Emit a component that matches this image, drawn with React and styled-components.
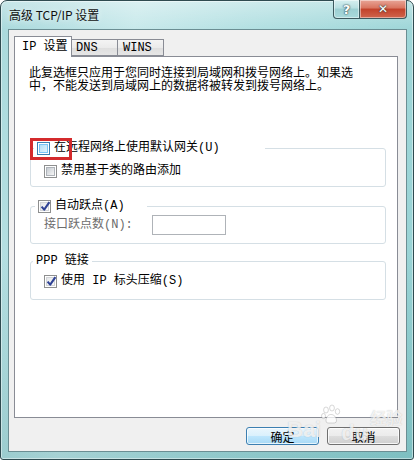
import React from 'react';
import styled, { createGlobalStyle } from 'styled-components';

const MONO = `"Liberation Mono", "Noto Sans CJK SC", monospace`;

const GlobalStyle = createGlobalStyle`
  html, body { margin: 0; padding: 0; background: #ffffff; }
  body { font-family: "Noto Sans CJK SC", sans-serif; font-size: 12px; color: #000; }
  * { box-sizing: border-box; }
`;

const Window = styled.div`
  position: relative;
  width: 414px;
  height: 460px;
  display: flex;
  flex-direction: column;
  padding: 0 6px 7px 7px;
  border: 1px solid #2f4b50;
  border-radius: 7px 7px 3px 3px;
  background:
    linear-gradient(180deg, rgba(255,255,255,0.35) 0, rgba(255,255,255,0) 28px),
    linear-gradient(180deg, rgba(0,0,0,0) 55%, rgba(40,125,128,0.22) 100%),
    linear-gradient(100deg, #a9d9dc 0%, #c8e9eb 28%, #b3e0e2 52%, #a2d8da 78%, #95d1d3 100%);
  box-shadow: inset 0 0 0 1px rgba(255,255,255,0.45);
`;

const TitleBar = styled.div`
  height: 28px;
  flex: none;
  display: flex;
  justify-content: space-between;
  align-items: flex-start;
`;

const Title = styled.div`
  margin: 6px 0 0 1px;
  line-height: 16px;
  font-size: 12px;
  color: #101010;
  font-family: "Noto Sans CJK SC", "Liberation Sans", sans-serif;
  text-shadow: 0 0 6px rgba(255,255,255,0.9);
`;

const Caption = styled.div`
  display: flex;
  margin-top: -1px;
`;

const CaptionButton = styled.div`
  height: 19px;
  width: ${p => p.$w}px;
  border: 1px solid #3d5a5f;
  border-top: none;
  display: flex;
  align-items: center;
  justify-content: center;
  color: #fff;
  font-family: "DejaVu Sans", sans-serif;
  font-weight: bold;
  font-size: ${p => p.$size}px;
  text-shadow: 0 0 2px #203a3e, 0 0 1px #203a3e;
  border-radius: ${p => p.$radius};
  background: ${p => p.$bg};
  box-shadow: inset 0 0 0 1px rgba(255,255,255,0.45);
`;

const Client = styled.div`
  flex: 1;
  display: flex;
  flex-direction: column;
  border: 1px solid #6b8e93;
  background: #f0f0f0;
  padding: 6px 8px 6px 5px;
`;

const Tabs = styled.div`
  height: 20px;
  flex: none;
  display: flex;
  align-items: flex-end;
  position: relative;
  z-index: 1;
`;

const Tab = styled.div`
  width: ${p => p.$w}px;
  height: ${p => (p.$active ? 21 : 17)}px;
  margin-bottom: ${p => (p.$active ? -1 : 0)}px;
  margin-left: ${p => (p.$active ? 0 : -1)}px;
  padding-left: ${p => p.$pad}px;
  border: 1px solid #898c95;
  border-bottom: ${p => (p.$active ? 'none' : '1px solid #898c95')};
  background: ${p => (p.$active ? '#ffffff' : 'linear-gradient(180deg, #f4f4f4 0%, #ebebeb 50%, #dedede 51%, #e6e6e6 100%)')};
  display: flex;
  align-items: center;
  font-family: ${MONO};
  font-size: 12px;
  line-height: 14px;
  color: #000;
`;

const Panel = styled.div`
  height: 362px;
  flex: none;
  background: #ffffff;
  border: 1px solid #898c95;
  padding: 11px 11px 0 14px;
  display: flex;
  flex-direction: column;
`;

const Intro = styled.p`
  margin: 0;
  font-family: ${MONO};
  font-size: 12px;
  line-height: 13px;
  white-space: nowrap;
`;

const Group = styled.fieldset`
  margin: ${p => p.$top}px 0 0 1px;
  min-width: 0;
  padding: ${p => p.$pad};
  border: 1px solid #d5dfe5;
  border-radius: 3px;
`;

const Legend = styled.legend`
  position: relative;
  width: ${p => (p.$width ? `${p.$width}px` : 'auto')};
  height: 14px;
  margin-left: ${p => p.$offset}px;
  padding: 0 3px;
  line-height: 14px;
`;

const Row = styled.div`
  display: flex;
  align-items: center;
  gap: 4px;
  height: ${p => p.$h || 14}px;
  padding-left: ${p => p.$indent || 0}px;
  font-family: ${MONO};
  font-size: 12px;
  line-height: 14px;
  white-space: nowrap;
  color: ${p => (p.$disabled ? '#6d6d6d' : '#000')};
`;

const Label = styled.span`
  display: inline-block;
  width: ${p => (p.$w ? `${p.$w}px` : 'auto')};
`;

const Box = styled.span`
  position: relative;
  width: 13px;
  height: 13px;
  flex: none;
  background: #fff;
  border: 1px solid ${p => (p.$hover ? '#3c7fb1' : '#8e8f8f')};
  &::before {
    content: '';
    position: absolute;
    inset: 1px;
    border: 1px solid ${p => (p.$hover ? '#79c6f9' : p.$checked ? '#d2d4d7' : '#aeb3b9')};
    background: ${p =>
      p.$hover
        ? 'linear-gradient(135deg, #b1dff9 0%, #e2f4fd 100%)'
        : p.$checked
          ? 'linear-gradient(135deg, #e4e6e9 0%, #fbfbfb 100%)'
          : 'linear-gradient(135deg, #c6cbd1 0%, #f6f6f6 100%)'};
  }
  svg { position: absolute; left: 0; top: -1px; }
`;

const TextInput = styled.div`
  width: 74px;
  height: 20px;
  border: 1px solid #afb3b8;
  background: #ffffff;
`;

const Marker = styled.span`
  position: absolute;
  left: -4px;
  top: -3px;
  width: 42px;
  height: 22px;
  border: 3px solid #d42a2c;
  pointer-events: none;
`;

const Footer = styled.div`
  display: flex;
  justify-content: flex-end;
  gap: 8px;
  margin: 9px -2px 0 0;
`;

const Button = styled.div`
  width: 73px;
  height: 18px;
  border: 1px solid ${p => (p.$primary ? '#3c7fb1' : '#707070')};
  border-radius: 3px;
  display: flex;
  align-items: center;
  justify-content: center;
  font-size: 12px;
  color: #000;
  background: ${p =>
    p.$primary
      ? 'linear-gradient(180deg, #eaf6fd 0%, #d9f0fc 50%, #bee6fd 51%, #a7d9f5 100%)'
      : 'linear-gradient(180deg, #f2f2f2 0%, #ebebeb 50%, #dddddd 51%, #cfcfcf 100%)'};
  box-shadow: inset 0 0 0 1px ${p => (p.$primary ? 'rgba(255,255,255,0.7)' : 'rgba(255,255,255,0.8)')};
`;

/* faint watermark stamped over the bottom-right of the shot */
const Watermark = styled.div`
  position: absolute;
  left: 286px;
  top: 403px;
  display: flex;
  align-items: flex-start;
  color: rgba(255,255,255,0.75);
  text-shadow: 0 0 1px rgba(90,90,90,0.35);
  pointer-events: none;
  font-family: "Liberation Sans", sans-serif;
  font-weight: bold;
`;

const MarkBig = styled.span`
  font-size: 22px;
  line-height: 22px;
  margin-top: ${p => p.$top || 0}px;
`;

const MarkCjk = styled.span`
  font-family: "Noto Sans CJK SC", sans-serif;
  font-size: 16px;
  line-height: 18px;
  margin: 4px 0 0 2px;
`;

const Checkbox = ({ checked, hover }) => (
  <Box $checked={checked} $hover={hover}>
    {checked && (
      <svg width="13" height="13" viewBox="0 0 13 13">
        <path d="M2.6 6.6 L5.2 9.6 L10.4 2.2" fill="none" stroke="#2f4295" strokeWidth="2.1" strokeLinejoin="round" />
      </svg>
    )}
  </Box>
);

const Paw = () => (
  <svg width="20" height="22" viewBox="0 0 20 22" style={{ marginTop: 0 }}>
    <g fill="rgba(255,255,255,0.75)" stroke="rgba(90,90,90,0.3)" strokeWidth="0.8">
      <ellipse cx="5" cy="6" rx="2.4" ry="3" />
      <ellipse cx="11" cy="4" rx="2.4" ry="3" />
      <ellipse cx="16.5" cy="7.5" rx="2.2" ry="2.8" />
      <ellipse cx="2.5" cy="12" rx="2" ry="2.6" />
      <path d="M5 17 C5 12 8 10.5 10 10.5 C13 10.5 15.5 13 15.5 17 C15.5 19.5 12 19 10 19 C8 19 5 19.5 5 17 Z" />
    </g>
  </svg>
);

export default function App() {
  return (
    <>
      <GlobalStyle />
      <Window>
        <TitleBar>
          <Title>高级 TCP/IP 设置</Title>
          <Caption>
            <CaptionButton
              $w={27}
              $size={13}
              $radius="0 0 0 4px"
              $bg="linear-gradient(180deg, #d6eff0 0%, #b8e0e2 45%, #9ccfd2 50%, #a9dadc 100%)"
            >
              ?
            </CaptionButton>
            <CaptionButton
              $w={47}
              $size={12}
              $radius="0 0 4px 0"
              $bg="linear-gradient(180deg, #e8a597 0%, #d9745f 45%, #c2412a 50%, #d0654d 100%)"
              style={{ borderLeft: 'none' }}
            >
              ✕
            </CaptionButton>
          </Caption>
        </TitleBar>

        <Client>
          <Tabs>
            <Tab $active $w={58} $pad={7}>IP 设置</Tab>
            <Tab $w={47} $pad={4}>DNS</Tab>
            <Tab $w={47} $pad={5}>WINS</Tab>
          </Tabs>

          <Panel>
            <Intro>
              此复选框只应用于您同时连接到局域网和拨号网络上。如果选
              <br />
              中，不能发送到局域网上的数据将被转发到拨号网络上。
            </Intro>

            <Group $top={47} $pad="9px 0 8px 0">
              <Legend $offset={3} $width={231}>
                <Row>
                  <Checkbox hover />
                  <Label>在远程网络上使用默认网关(U)</Label>
                </Row>
                <Marker />
              </Legend>
              <Row $indent={13}>
                <Checkbox />
                <Label>禁用基于类的路由添加</Label>
              </Row>
            </Group>

            <Group $top={12} $pad="2px 0 8px 0">
              <Legend $offset={4} $width={112}>
                <Row>
                  <Checkbox checked />
                  <Label>自动跃点(A)</Label>
                </Row>
              </Legend>
              <Row $indent={13} $h={20} $disabled>
                <Label $w={104}>接口跃点数(N):</Label>
                <TextInput />
              </Row>
            </Group>

            <Group $top={10} $pad="6px 0 11px 0">
              <Legend $offset={2}>
                <Row>
                  <Label>PPP 链接</Label>
                </Row>
              </Legend>
              <Row $indent={13}>
                <Checkbox checked />
                <Label>使用 IP 标头压缩(S)</Label>
              </Row>
            </Group>
          </Panel>

          <Footer>
            <Button $primary>确定</Button>
            <Button>取消</Button>
          </Footer>
        </Client>

        <Watermark>
          <MarkBig $top={15}>Bai</MarkBig>
          <Paw />
          <MarkBig $top={18}>du</MarkBig>
          <MarkCjk>经验</MarkCjk>
        </Watermark>
      </Window>
    </>
  );
}
